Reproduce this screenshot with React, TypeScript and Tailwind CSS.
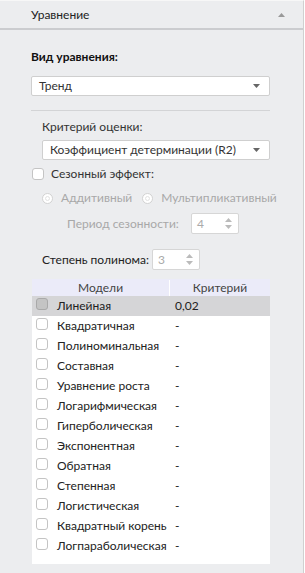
import React from "react";

const models = [
  "Линейная",
  "Квадратичная",
  "Полиноминальная",
  "Составная",
  "Уравнение роста",
  "Логарифмическая",
  "Гиперболическая",
  "Экспонентная",
  "Обратная",
  "Степенная",
  "Логистическая",
  "Квадратный корень",
  "Логпараболическая",
];

const DownArrow = () => (
  <svg width="7" height="4" viewBox="0 0 7 4" className="shrink-0">
    <path d="M0 0h7L3.5 4z" fill="#666" />
  </svg>
);

const Select: React.FC<{ value: string }> = ({ value }) => (
  <div className="flex h-[20px] items-center justify-between rounded-[2px] border border-[#cfcfcf] bg-white pl-[7px] pr-[9px] text-[#333]">
    <span>{value}</span>
    <DownArrow />
  </div>
);

const Spin: React.FC<{ value: string }> = ({ value }) => (
  <div className="flex h-[21px] w-[48px] shrink-0 items-center justify-between rounded-[2px] border border-[#d6d6d6] bg-white pl-[5px] pr-[6px] text-[#aaa]">
    <span>{value}</span>
    <svg width="7" height="11" viewBox="0 0 7 11">
      <path d="M0 4L3.5 0L7 4z" fill="#bbb" />
      <path d="M0 7h7L3.5 11z" fill="#bbb" />
    </svg>
  </div>
);

const Check: React.FC<{ active?: boolean }> = ({ active }) => (
  <span
    className={
      "inline-block h-[12px] w-[12px] shrink-0 rounded-[3px] border " +
      (active ? "border-[#a9a9a9] bg-[#c4c4c4]" : "border-[#c4c4c4] bg-white")
    }
  />
);

const Radio = () => (
  <span className="flex h-[11px] w-[11px] shrink-0 items-center justify-center rounded-full border border-[#d2d2d2] bg-white">
    <span className="h-[5px] w-[5px] rounded-full border border-[#e2e2e2]" />
  </span>
);

export default function App() {
  return (
    <div
      className="h-[573px] w-[305px] bg-white text-[12px] leading-[16px]"
      style={{ fontFamily: 'Lato, "Noto Sans", sans-serif' }}
    >
      <div className="h-[573px] w-[304px] border-r border-t border-r-[#d0d0d0] border-t-[#f7f7f7] bg-[#ecedef]">
        <div className="flex h-[29px] items-center justify-between border-b-2 border-[#cbcccf] pl-[31px] pr-[18px] text-[#222]">
          <span>Уравнение</span>
          <svg width="7" height="4" viewBox="0 0 7 4">
            <path d="M0 4h7L3.5 0z" fill="#999" />
          </svg>
        </div>

        <div className="ml-[31px] w-[239px]">
          <div className="mt-[19px] font-bold text-[#111]">Вид уравнения:</div>
          <div className="mt-[11px]">
            <Select value="Тренд" />
          </div>
          <div className="mt-[14px] h-px bg-[#d3d4d6]" />

          <div className="ml-[11px] mt-[8px] text-[#333]">Критерий оценки:</div>
          <div className="ml-[11px] mt-[5px]">
            <Select value="Коэффициент детерминации (R2)" />
          </div>

          <div className="ml-[1px] mt-[6px] flex items-center gap-[7px] text-[#333]">
            <Check />
            <span>Сезонный эффект:</span>
          </div>

          <div className="ml-[11px] mt-[8px] flex items-center text-[#a8a8a8]">
            <Radio />
            <span className="ml-[8px]">Аддитивный</span>
            <span className="ml-[10px]">
              <Radio />
            </span>
            <span className="ml-[8px]">Мультипликативный</span>
          </div>

          <div className="ml-[36px] mt-[7px] flex items-center text-[#a8a8a8]">
            <span className="w-[124px] shrink-0">Период сезонности:</span>
            <Spin value="4" />
          </div>

          <div className="ml-[11px] mt-[15px] flex items-center gap-[3px] text-[#222]">
            <span className="whitespace-nowrap">Степень полинома:</span>
            <Spin value="3" />
          </div>

          <div className="ml-[1px] mt-[9px] w-[238px] bg-white pb-[8px]">
            <div className="flex h-[17px] items-center bg-[#ebebf9] text-[#444]">
              <div className="w-[138px] border-r border-white text-center">Модели</div>
              <div className="flex-1 text-center">Критерий</div>
            </div>
            {models.map((m, i) => (
              <div
                key={m}
                className={
                  "flex h-[20px] items-center text-[#222] " + (i === 0 ? "bg-[#d5d5d7]" : "")
                }
              >
                <span className="ml-[4px]">
                  <Check active={i === 0} />
                </span>
                <span className="ml-[9px] w-[113px] shrink-0 whitespace-nowrap">{m}</span>
                <span className="ml-[5px]">{i === 0 ? "0,02" : "-"}</span>
              </div>
            ))}
          </div>
        </div>
      </div>
    </div>
  );
}
